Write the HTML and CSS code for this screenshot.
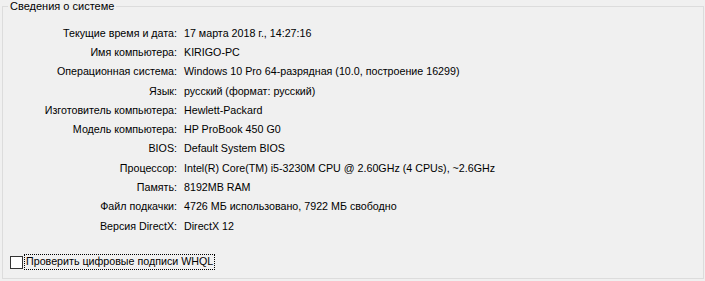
FILE: index.html
```html
<!DOCTYPE html>
<html lang="ru">
<head>
    <meta charset="UTF-8">
    <title>Сведения о системе</title>
    <link rel="stylesheet" href="styles.css">
</head>
<body>
    <div class="group">
        <span class="group-title">Сведения о системе</span>
        <div class="info">
            <span class="label">Текущие время и дата:</span><span class="value">17 марта 2018 г., 14:27:16</span>
            <span class="label">Имя компьютера:</span><span class="value">KIRIGO-PC</span>
            <span class="label">Операционная система:</span><span class="value">Windows 10 Pro 64-разрядная (10.0, построение 16299)</span>
            <span class="label">Язык:</span><span class="value">русский (формат: русский)</span>
            <span class="label">Изготовитель компьютера:</span><span class="value">Hewlett-Packard</span>
            <span class="label">Модель компьютера:</span><span class="value">HP ProBook 450 G0</span>
            <span class="label">BIOS:</span><span class="value">Default System BIOS</span>
            <span class="label">Процессор:</span><span class="value">Intel(R) Core(TM) i5-3230M CPU @ 2.60GHz (4 CPUs), ~2.6GHz</span>
            <span class="label">Память:</span><span class="value">8192MB RAM</span>
            <span class="label">Файл подкачки:</span><span class="value">4726 МБ использовано, 7922 МБ свободно</span>
            <span class="label">Версия DirectX:</span><span class="value">DirectX 12</span>
        </div>
        <label class="check">
            <span class="box"></span>
            <span class="check-text">Проверить цифровые подписи WHQL</span>
        </label>
    </div>
</body>
</html>
```

FILE: styles.css
```css
body {
    margin: 0;
    background-color: #f0f0f0;
    color: #000;
    font-family: "Liberation Sans", Arial, sans-serif;
    font-size: 10.7px;
}

.group {
    position: relative;
    margin: 6px 0 0 2px;
    width: 700px;
    height: 271px;
    border: 1px solid #dcdcdc;
}

.group-title {
    position: absolute;
    top: -7px;
    left: 5px;
    padding: 0 2px;
    font-size: 11px;
    line-height: 13px;
    background-color: #f0f0f0;
}

.info {
    display: grid;
    grid-template-columns: 174px auto;
    grid-auto-rows: 19.3px;
    column-gap: 7px;
    align-items: center;
    padding-top: 16px;
}

.label {
    text-align: right;
    white-space: nowrap;
}

.value {
    white-space: nowrap;
}

.check {
    display: flex;
    align-items: center;
    margin: 20px 0 0 7px;
}

.box {
    width: 11px;
    height: 11px;
    border: 1px solid #333;
    background-color: #fff;
}

.check-text {
    margin-left: 2px;
    padding: 0 1px 1px 1px;
    line-height: 13px;
    outline: 1px dotted #000;
}
```
